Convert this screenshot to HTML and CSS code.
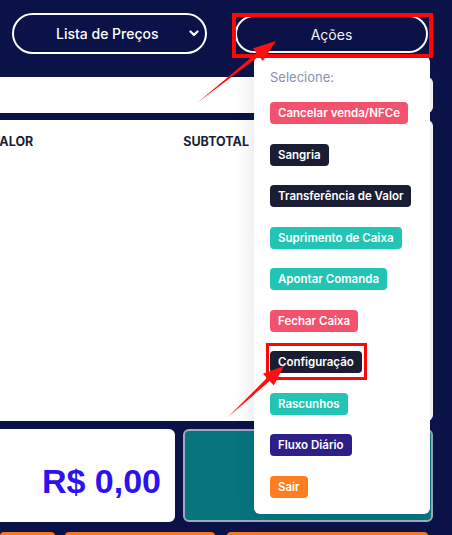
FILE: index.html
```html
<!DOCTYPE html>
<html lang="pt-BR">
<head>
<meta charset="utf-8">
<title>PDV</title>
<link rel="stylesheet" href="styles.css">
</head>
<body>
<div class="page">
  <div class="topbar">
    <div class="select">
      <span>Lista de Preços</span>
      <svg class="chev" width="10" height="7" viewBox="0 0 10 7"><path d="M1.5 1.5 L5 5 L8.5 1.5" fill="none" stroke="#fff" stroke-width="2.2" stroke-linecap="round" stroke-linejoin="round"/></svg>
    </div>
    <div class="actions">Ações</div>
  </div>
  <div class="search"></div>
  <div class="table">
    <div class="thead">
      <span class="col-valor">VALOR</span>
      <span class="col-sub">SUBTOTAL</span>
    </div>
  </div>
  <div class="bottom">
    <div class="total">R$ 0,00</div>
    <div class="pay"></div>
  </div>
  <div class="footer">
    <span class="f1"></span>
    <span class="f2"></span>
    <span class="f3"></span>
  </div>

  <div class="dropdown">
    <div class="dd-title">Selecione:</div>
    <div class="dd-list">
      <span class="badge red">Cancelar venda/NFCe</span>
      <span class="badge dark">Sangria</span>
      <span class="badge dark">Transferência de Valor</span>
      <span class="badge teal">Suprimento de Caixa</span>
      <span class="badge teal">Apontar Comanda</span>
      <span class="badge red">Fechar Caixa</span>
      <span class="badge dark">Configuração</span>
      <span class="badge teal">Rascunhos</span>
      <span class="badge purple">Fluxo Diário</span>
      <span class="badge orange">Sair</span>
    </div>
  </div>

  <div class="hl hl-actions"></div>
  <div class="hl hl-config"></div>
  <svg class="arrows" width="452" height="535" viewBox="0 0 452 535">
    <polygon points="197,103 256.6,53.1 252.8,48.4 276,41 262.8,61.0 259.0,56.3" fill="#ff1010"/>
    <polygon points="228,417 266.9,378.1 262.9,373.7 284,366 273.7,385.5 269.7,381.1" fill="#ff1010"/>
  </svg>
</div>
</body>
</html>
```

FILE: styles.css
```css
* { box-sizing: border-box; }
html, body { margin: 0; padding: 0; }
body {
  background: #0a1248;
  font-family: Inter, "Noto Sans", sans-serif;
}
.page {
  position: relative;
  width: 452px;
  height: 535px;
  overflow: hidden;
  background: #0a1248;
  display: flex;
  flex-direction: column;
}
.topbar {
  display: flex;
  align-items: flex-start;
  gap: 28px;
  padding: 13px 0 0 12px;
}
.select {
  width: 195px;
  height: 41px;
  border: 2px solid #fff;
  border-radius: 21px;
  display: flex;
  align-items: center;
  padding: 0 6px 0 42px;
  color: #fff;
  font-size: 14px;
  font-weight: 500;
}
.select .chev { margin-left: auto; }
.actions {
  margin-top: 2px;
  width: 193px;
  height: 38px;
  border: 2px solid #fff;
  border-radius: 19px;
  display: flex;
  align-items: center;
  justify-content: center;
  color: #f1f2f8;
  font-size: 14px;
  font-weight: 400;
}
.search {
  margin-top: 23px;
  margin-left: -20px;
  width: 453px;
  height: 36px;
  background: #fff;
  border-radius: 6px;
  flex-shrink: 0;
}
.table {
  margin-top: 7px;
  margin-left: -20px;
  width: 453px;
  height: 301px;
  background: #fff;
  border-radius: 6px;
  flex-shrink: 0;
}
.thead {
  display: flex;
  padding: 14px 0 0 11px;
  font-size: 12.5px;
  font-weight: 700;
  color: #1b1f3a;
}
.col-sub { margin-left: 150px; }
.bottom {
  margin-top: 8px;
  display: flex;
  gap: 8px;
  height: 93px;
  flex-shrink: 0;
}
.total {
  margin-left: -20px;
  width: 195px;
  background: #fff;
  border-radius: 6px;
  display: flex;
  align-items: center;
  justify-content: flex-end;
  padding: 12px 14px 0 0;
  font-family: "Liberation Sans", Arial, sans-serif;
  font-weight: 700;
  font-size: 34px;
  color: #2c12f2;
}
.pay {
  width: 250px;
  background: #06757e;
  border: 2px solid #a3a8bb;
  border-radius: 6px;
}
.footer {
  margin-top: 10px;
  display: flex;
  height: 6px;
  flex-shrink: 0;
}
.footer span {
  height: 6px;
  background: #f4771f;
  border-radius: 4px 4px 0 0;
}
.f1 { width: 55px; }
.f2 { width: 150px; margin-left: 10px; }
.f3 { width: 201px; margin-left: 12px; }

.dropdown {
  position: absolute;
  left: 254px;
  top: 56px;
  width: 176px;
  height: 458px;
  background: #fff;
  border-radius: 6px;
  box-shadow: 0 0 22px rgba(40, 40, 90, 0.14);
  padding: 12px 16px 16px 16px;
}
.dd-title {
  font-size: 13px;
  line-height: 18px;
  color: #8990b0;
  font-weight: 400;
}
.dd-list {
  margin-top: 16px;
  display: flex;
  flex-direction: column;
  align-items: flex-start;
  gap: 19.55px;
}
.badge {
  height: 22px;
  line-height: 22px;
  padding: 0 8px;
  border-radius: 4px;
  color: #fff;
  font-size: 11.5px;
  font-weight: 600;
  white-space: nowrap;
}
.red { background: #f4516c; }
.dark { background: #1b1e33; }
.teal { background: #22c5b3; }
.purple { background: #2d1e88; }
.orange { background: #fd7e1e; }

.hl {
  position: absolute;
  border: 4px solid #ff0606;
}
.hl-actions { left: 232px; top: 13px; width: 201px; height: 45px; }
.hl-config { left: 266px; top: 343px; width: 101px; height: 37px; border-width: 3px; }
.arrows {
  position: absolute;
  left: 0;
  top: 0;
  pointer-events: none;
}
```
